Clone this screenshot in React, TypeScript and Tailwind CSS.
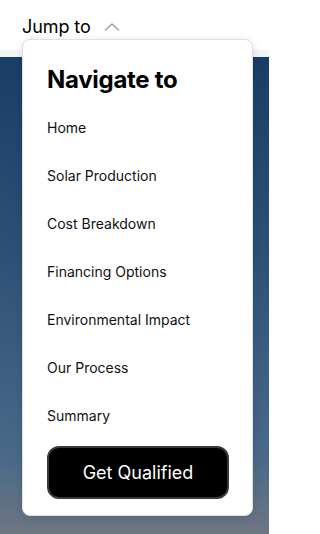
const items = [
  "Home",
  "Solar Production",
  "Cost Breakdown",
  "Financing Options",
  "Environmental Impact",
  "Our Process",
  "Summary",
];

export default function App() {
  return (
    <div className="relative w-[269px] h-[534px] overflow-hidden font-['Inter',sans-serif] bg-white">
      {/* header */}
      <div className="h-[50px] bg-white flex items-center px-[22px] pt-[2px]">
        <span className="text-[18px] text-black tracking-[-0.1px]">Jump to</span>
        <svg
          className="ml-[13px] mt-[2px]"
          width="16"
          height="10"
          viewBox="0 0 16 10"
          fill="none"
          stroke="#a3a3a3"
          strokeWidth="1.6"
          strokeLinecap="round"
          strokeLinejoin="round"
        >
          <path d="M1.5 8 L8 2 L14.5 8" />
        </svg>
      </div>
      <div className="h-[7px] bg-[#f3f4f6]" />
      <div className="h-[477px] bg-[linear-gradient(to_bottom,#1a3d67_0%,#2c5075_40%,#4a6a88_85%,#6f7682_100%)]" />

      {/* dropdown */}
      <div className="absolute left-[22px] top-[39px] w-[231px] bg-white rounded-[8px] border border-[#e0e0e0] shadow-[0_2px_8px_rgba(0,0,0,0.12)] px-[24px] pt-[24px] pb-[16px]">
        <h2 className="text-[24px] leading-[32px] font-bold text-black tracking-[-0.3px]">Navigate to</h2>
        <ul className="mt-[7px]">
          {items.map((it) => (
            <li key={it} className="h-[48px] flex items-center text-[14px] text-[#111]">
              {it}
            </li>
          ))}
        </ul>
        <button className="mt-[7px] w-[182px] h-[53px] rounded-[12px] bg-black text-white text-[18px] border-2 border-[#3a3a3a] flex items-center justify-center">
          Get Qualified
        </button>
      </div>
    </div>
  );
}
